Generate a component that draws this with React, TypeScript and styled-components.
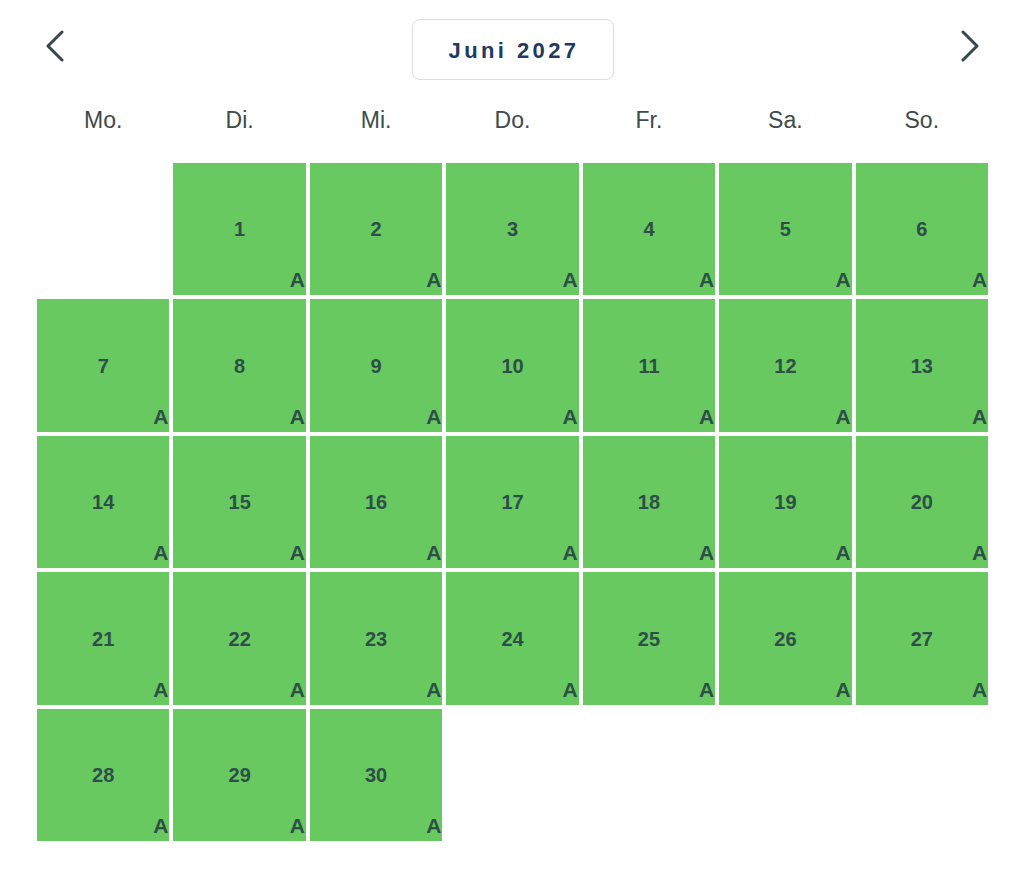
import styled, { createGlobalStyle } from "styled-components";

const GlobalStyle = createGlobalStyle`
  html, body {
    margin: 0;
    padding: 0;
    background: #ffffff;
    font-family: "Liberation Sans", Arial, sans-serif;
  }
`;

const WEEKDAYS = ["Mo.", "Di.", "Mi.", "Do.", "Fr.", "Sa.", "So."];

// Juni 2027 beginnt an einem Dienstag
const FIRST_OFFSET = 1;
const DAYS_IN_MONTH = 30;

const Chevron = ({ dir }: { dir: "left" | "right" }) => (
  <svg width="20" height="32" viewBox="0 0 20 32" fill="none">
    <path
      d={dir === "left" ? "M17 2 L3 16 L17 30" : "M3 2 L17 16 L3 30"}
      stroke="#37474f"
      strokeWidth="3"
      strokeLinecap="round"
      strokeLinejoin="round"
    />
  </svg>
);

const App = () => {
  const cells: (number | null)[] = [
    ...Array.from({ length: FIRST_OFFSET }, () => null),
    ...Array.from({ length: DAYS_IN_MONTH }, (_, i) => i + 1),
  ];

  return (
    <>
      <GlobalStyle />
      <Page>
        <Header>
          <NavButton aria-label="Vorheriger Monat">
            <Chevron dir="left" />
          </NavButton>
          <MonthTitle>Juni 2027</MonthTitle>
          <NavButton aria-label="Nächster Monat">
            <Chevron dir="right" />
          </NavButton>
        </Header>

        <WeekdayRow>
          {WEEKDAYS.map((d) => (
            <Weekday key={d}>{d}</Weekday>
          ))}
        </WeekdayRow>

        <DayGrid>
          {cells.map((day, i) =>
            day === null ? (
              <EmptyCell key={`e${i}`} />
            ) : (
              <DayCell key={day}>
                <DayNumber>{day}</DayNumber>
                <StatusMark>A</StatusMark>
              </DayCell>
            )
          )}
        </DayGrid>
      </Page>
    </>
  );
};

export default App;

const Page = styled.div`
  width: 951px;
  padding: 19px 36px 0 37px;
`;

const Header = styled.div`
  display: flex;
  align-items: center;
  justify-content: space-between;
  height: 60px;
  padding: 0 8px;
`;

const NavButton = styled.button`
  display: flex;
  align-items: center;
  justify-content: center;
  width: 20px;
  height: 32px;
  padding: 0;
  border: none;
  background: none;
  cursor: pointer;
  margin-top: -6px;
`;

const MonthTitle = styled.button`
  width: 202px;
  height: 61px;
  padding: 3px 0 0 3px;
  border: 1.5px solid #dddddd;
  border-radius: 8px;
  background: #ffffff;
  color: #1f3a60;
  font-family: "Liberation Sans", Arial, sans-serif;
  font-size: 22px;
  font-weight: 700;
  letter-spacing: 3.4px;
  cursor: pointer;
`;

const WeekdayRow = styled.div`
  display: grid;
  grid-template-columns: repeat(7, 1fr);
  gap: 4px;
  margin-top: 27px;
`;

const Weekday = styled.div`
  text-align: center;
  font-size: 23px;
  line-height: 28px;
  color: #3d4b4b;
`;

const DayGrid = styled.div`
  display: grid;
  grid-template-columns: repeat(7, 1fr);
  gap: 4px;
  margin-top: 29px;
`;

const EmptyCell = styled.div`
  aspect-ratio: 1 / 1;
`;

const DayCell = styled.div`
  position: relative;
  aspect-ratio: 1 / 1;
  display: flex;
  align-items: center;
  justify-content: center;
  background: #67c95f;
`;

const DayNumber = styled.span`
  font-size: 20px;
  font-weight: 700;
  color: #2e4f48;
  margin-top: 1px;
`;

const StatusMark = styled.span`
  position: absolute;
  right: 1px;
  bottom: 5px;
  font-size: 21px;
  line-height: 1;
  font-weight: 700;
  color: #2e4f48;
`;
